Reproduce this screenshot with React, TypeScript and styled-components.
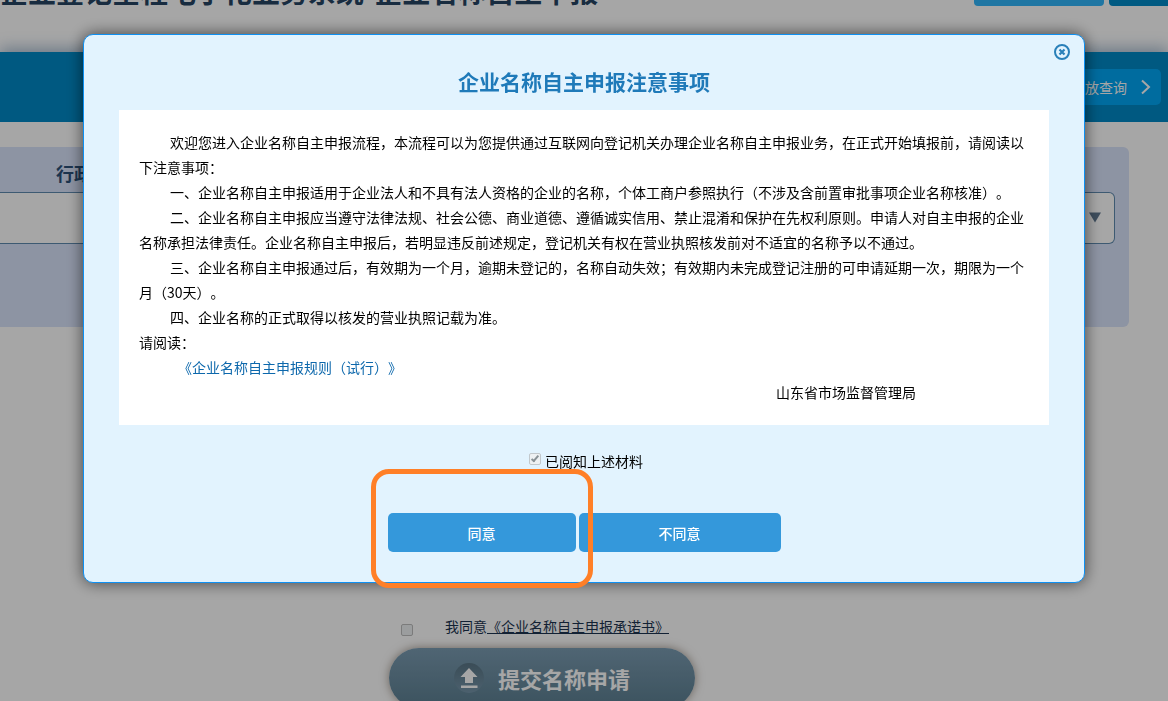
import React from "react";
import styled, { createGlobalStyle } from "styled-components";

const GlobalStyle = createGlobalStyle`
  *, *::before, *::after { box-sizing: border-box; }
  body {
    margin: 0;
    background: #fff;
    color: #000;
    font: 14px/20px "Noto Sans CJK SC", sans-serif;
    text-spacing-trim: space-all;
    overflow: hidden;
  }
  button, input { font-family: inherit; margin: 0; }
  h1, h2, p { margin: 0; }
`;

/* The page behind the dialog, scrolled down a little */
const Page = styled.div`
  height: calc(100vh + 40px);
  margin-top: -40px;
  overflow: hidden;
  display: flex;
  flex-direction: column;
`;

const TopBar = styled.header`
  flex: none;
  display: flex;
  justify-content: space-between;
  align-items: flex-start;
  height: 92px;
  overflow: hidden;
`;

const SiteTitle = styled.h1`
  padding-top: 11px;
  font-size: 28px;
  line-height: 40px;
  font-weight: 700;
  color: #264463;
  white-space: nowrap;
`;

const TopActions = styled.div`
  display: flex;
  gap: 5px;
  margin-right: -50px;
`;

const TopButton = styled.button<{ $tone: string }>`
  width: ${(p) => (p.$tone === "light" ? 130 : 109)}px;
  height: 46px;
  border: 0;
  border-radius: 4px;
  color: #fff;
  background: ${(p) => (p.$tone === "light" ? "#30b6fa" : "#008ac8")};
`;

const Banner = styled.nav`
  flex: none;
  display: flex;
  justify-content: flex-end;
  align-items: center;
  height: 70px;
  padding: 0 7px;
  background: #0089c6;
  box-shadow: 0 -4px 14px rgba(40, 90, 140, 0.4);
`;

const QueryButton = styled.button`
  display: flex;
  align-items: center;
  gap: 14px;
  height: 36px;
  padding: 0 10px 0 20px;
  border: 0;
  border-radius: 5px;
  background: #00a6f5;
  color: #fff;
  font-size: 14px;
  line-height: 20px;
`;

const Content = styled.main`
  flex: 1;
  background: #fff;
`;

const Panel = styled.section`
  height: 180px;
  margin: 25px 39px 0 0;
  padding-right: 14px;
  border-radius: 0 6px 6px 0;
  background: #d9e3fa;
`;

const FieldLabel = styled.label`
  display: block;
  height: 45px;
  padding: 6px 0 0 56px;
  font-size: 18px;
  line-height: 40px;
  font-weight: 700;
  color: #2b5078;
`;

const FieldBox = styled.div`
  position: relative;
  display: flex;
  height: 52px;
`;

const Field = styled.select`
  appearance: none;
  flex: 1;
  border: 1px solid #5f8bb0;
  border-left: 0;
  border-radius: 0 6px 6px 0;
  background: #fff;
`;

const FieldArrow = styled.svg`
  position: absolute;
  right: 14px;
  top: 20px;
  pointer-events: none;
`;

const PledgeRow = styled.div`
  display: flex;
  align-items: center;
  gap: 32px;
  height: 20px;
  margin: 289px 0 0 401px;
  color: #1c3450;
`;

const PledgeLink = styled.a`
  color: inherit;
  text-decoration: underline;
`;

const Tick = styled.input`
  appearance: none;
  position: relative;
  flex: none;
  width: 12px;
  height: 12px;
  border: 1px solid #c2c8cc;
  border-radius: 2px;
  background: #eef1f3;

  &:checked::after {
    content: "";
    position: absolute;
    left: 3px;
    top: 0;
    width: 4px;
    height: 8px;
    border: solid #899297;
    border-width: 0 2px 2px 0;
    transform: rotate(40deg);
  }
`;

const PledgeTick = styled(Tick)`
  align-self: flex-end;
  border-color: #bdbdbd;
`;

const SubmitButton = styled.button`
  display: flex;
  align-items: center;
  justify-content: center;
  gap: 14px;
  width: 306px;
  height: 60px;
  margin: 12px 0 0 389px;
  border: 0;
  border-radius: 30px;
  background: linear-gradient(#7b9cb2, #5c7f91);
  box-shadow: 0 0 10px rgba(70, 50, 30, 0.5);
  color: #fff;
  font-size: 22px;
  line-height: 32px;
  font-weight: 700;
`;

const Overlay = styled.div`
  position: fixed;
  inset: 0;
  display: flex;
  justify-content: center;
  align-items: flex-start;
  padding: 34px 20px;
  background: rgba(0, 0, 0, 0.35);
`;

const Dialog = styled.section`
  position: relative;
  flex: 0 1 1002px;
  padding: 26px 35px 30px;
  border: 1px solid #0e90f2;
  border-radius: 10px;
  background: #e2f3fe;
  box-shadow: 0 0 16px rgba(0, 0, 0, 0.6);
`;

const CloseButton = styled.button`
  position: absolute;
  top: 9px;
  right: 14px;
  display: flex;
  padding: 0;
  border: 0;
  background: none;
  color: #2980b9;
`;

const DialogTitle = styled.h2`
  margin-bottom: 9px;
  font-size: 21px;
  line-height: 40px;
  font-weight: 700;
  text-align: center;
  color: #1f7ab9;
`;

const Notice = styled.div`
  padding: 20px;
  background: #fff;
  line-height: 25px;
`;

const Clause = styled.p`
  text-indent: 31px;
`;

const RuleLine = styled.p`
  padding-left: 39px;
`;

const RuleLink = styled.a`
  color: #0d68ac;
  text-decoration: none;
`;

const Signature = styled.p`
  padding-right: 113px;
  text-align: right;
`;

const ReadLabel = styled.label`
  display: flex;
  justify-content: center;
  gap: 4px;
  margin-top: 26px;
  padding-left: 4px;

  ${Tick} { margin-top: 2px; }
`;

const Actions = styled.div`
  display: flex;
  justify-content: center;
  gap: 3px;
  margin-top: 42px;
`;

const Highlighted = styled.div`
  position: relative;
  z-index: 1;
  display: flex;

  &::after {
    content: "";
    position: absolute;
    inset: -44px -17px -36px;
    border: 5px solid #ff7f27;
    border-radius: 18px;
    pointer-events: none;
  }
`;

const ActionButton = styled.button<{ $wide?: boolean }>`
  width: ${(p) => (p.$wide ? 202 : 188)}px;
  height: 39px;
  padding: 0;
  border: 0;
  border-radius: 5px;
  background: #3498db;
  color: #fff;
  font-size: 14px;
  line-height: 20px;
  font-weight: 500;
`;

const clauses = [
  "欢迎您进入企业名称自主申报流程，本流程可以为您提供通过互联网向登记机关办理企业名称自主申报业务，在正式开始填报前，请阅读以下注意事项：",
  "一、企业名称自主申报适用于企业法人和不具有法人资格的企业的名称，个体工商户参照执行（不涉及含前置审批事项企业名称核准）。",
  "二、企业名称自主申报应当遵守法律法规、社会公德、商业道德、遵循诚实信用、禁止混淆和保护在先权利原则。申请人对自主申报的企业名称承担法律责任。企业名称自主申报后，若明显违反前述规定，登记机关有权在营业执照核发前对不适宜的名称予以不通过。",
  "三、企业名称自主申报通过后，有效期为一个月，逾期未登记的，名称自动失效；有效期内未完成登记注册的可申请延期一次，期限为一个月（30天）。",
  "四、企业名称的正式取得以核发的营业执照记载为准。",
];

export default function App() {
  return (
    <>
      <GlobalStyle />
      <Page>
        <TopBar>
          <SiteTitle>企业登记全程电子化业务系统-企业名称自主申报</SiteTitle>
          <TopActions>
            <TopButton $tone="light" type="button" aria-label="首页" />
            <TopButton $tone="dark" type="button" aria-label="退出" />
          </TopActions>
        </TopBar>
        <Banner>
          <QueryButton type="button">
            开放查询
            <svg width="10" height="16" viewBox="0 0 10 16" fill="none" stroke="currentColor" strokeWidth="2">
              <path d="M1 1.5 L8 8 L1 14.5" />
            </svg>
          </QueryButton>
        </Banner>
        <Content>
          <Panel>
            <FieldLabel htmlFor="region">行政区划</FieldLabel>
            <FieldBox>
              <Field id="region" />
              <FieldArrow width="12" height="11" viewBox="0 0 12 11">
                <path d="M0 0.5H12L6 10.5Z" fill="#607890" />
              </FieldArrow>
            </FieldBox>
          </Panel>
          <PledgeRow>
            <PledgeTick type="checkbox" id="pledge" />
            <span>
              <label htmlFor="pledge">我同意</label>
              <PledgeLink href="#pledge">《企业名称自主申报承诺书》</PledgeLink>
            </span>
          </PledgeRow>
          <SubmitButton type="button">
            <svg width="30" height="30" viewBox="0 0 30 30">
              <defs>
                <linearGradient id="disc" x1="0" y1="0" x2="0" y2="1">
                  <stop offset="0" stopColor="#5a7686" />
                  <stop offset="1" stopColor="#7595aa" />
                </linearGradient>
              </defs>
              <circle cx="15" cy="15" r="15" fill="url(#disc)" />
              <path d="M15 5 L23.5 14 H19 V20 H11 V14 H6.500 Z M7 22.500 H23.500 V25 H7 Z" fill="#fff" />
            </svg>
            提交名称申请
          </SubmitButton>
        </Content>
      </Page>
      <Overlay>
        <Dialog role="dialog" aria-modal="true" aria-labelledby="dialog-title">
          <CloseButton type="button" aria-label="关闭">
            <svg width="16" height="16" viewBox="0 0 16 16" fill="none" stroke="currentColor">
              <circle cx="8" cy="8" r="7" strokeWidth="2" />
              <path d="M5.500 5.500 L10.500 10.500 M10.500 5.500 L5.500 10.500" strokeWidth="2.200" />
            </svg>
          </CloseButton>
          <DialogTitle id="dialog-title">企业名称自主申报注意事项</DialogTitle>
          <Notice>
            {clauses.map((text) => (
              <Clause key={text}>{text}</Clause>
            ))}
            <p>请阅读：</p>
            <RuleLine>
              <RuleLink href="#rules">《企业名称自主申报规则（试行）》</RuleLink>
            </RuleLine>
            <Signature>山东省市场监督管理局</Signature>
          </Notice>
          <ReadLabel>
            <Tick type="checkbox" defaultChecked disabled />
            已阅知上述材料
          </ReadLabel>
          <Actions>
            <Highlighted>
              <ActionButton type="button">同意</ActionButton>
            </Highlighted>
            <ActionButton type="button" $wide>不同意</ActionButton>
          </Actions>
        </Dialog>
      </Overlay>
    </>
  );
}
